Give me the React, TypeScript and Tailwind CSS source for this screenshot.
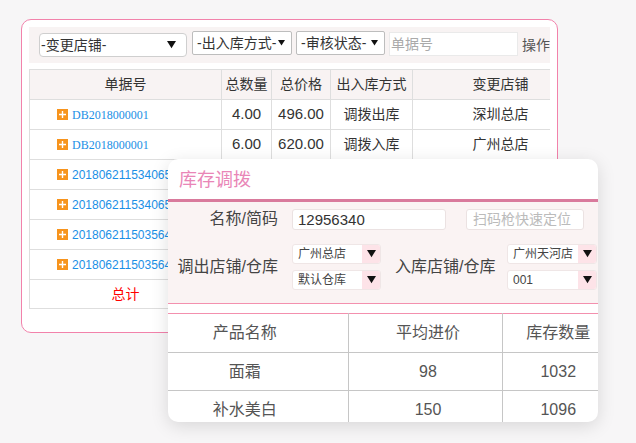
import React from "react";

const FONT = { fontFamily: '"Liberation Sans", "Noto Sans CJK SC", sans-serif' };

function PlusIcon() {
  return (
    <svg width="11" height="11" viewBox="0 0 11 11" className="shrink-0">
      <rect width="11" height="11" fill="#f7941d" />
      <path d="M5.5 2v7M2 5.5h7" stroke="#fff" strokeWidth="1.4" />
    </svg>
  );
}

function Caret({ size = 8 }: { size?: number }) {
  return (
    <svg width={size} height={size * 0.8} viewBox="0 0 10 8">
      <path d="M0 0h10L5 8z" fill="#111" />
    </svg>
  );
}

// rows 3-6 sit under the modal, only their order number shows
const ORDERS = [
  { no: "DB2018000001", serif: true, qty: "4.00", price: "496.00", type: "调拨出库", shop: "深圳总店" },
  { no: "DB2018000001", serif: true, qty: "6.00", price: "620.00", type: "调拨入库", shop: "广州总店" },
  { no: "2018062115340653", serif: false, qty: "", price: "", type: "", shop: "" },
  { no: "2018062115340653", serif: false, qty: "", price: "", type: "", shop: "" },
  { no: "2018062115035645", serif: false, qty: "", price: "", type: "", shop: "" },
  { no: "2018062115035645", serif: false, qty: "", price: "", type: "", shop: "" },
];

const PRODUCTS = [
  { name: "面霜", price: "98", stock: "1032" },
  { name: "补水美白", price: "150", stock: "1096" },
];

function ModalSelect({ label }: { label: string }) {
  return (
    <div className="flex h-[20px] bg-white border border-[#efe6e6] rounded-[3px] overflow-hidden">
      <span className="flex-1 pl-[5px] text-[12px] leading-[18px] text-[#444] whitespace-nowrap">{label}</span>
      <span className="w-[18px] bg-[#fde3e8] flex items-center justify-center">
        <Caret size={9} />
      </span>
    </div>
  );
}

export default function App() {
  return (
    <div className="relative w-[636px] h-[443px] bg-[#f7f6f7] overflow-hidden pt-[19px] pl-[21px]" style={FONT}>
      {/* Back card — order list */}
      <div className="w-[537px] h-[314px] rounded-[10px] border border-[#f282ab] bg-white p-[7px]">
        <div className="h-full overflow-hidden">
          {/* Toolbar */}
          <div className="h-[36px] bg-[#f8f3f3] flex items-start pl-[10px] text-[14px] text-[#333]">
            <div className="mt-[6px] w-[148px] h-[24px] border border-[#cfcfcf] rounded-[4px] bg-white flex items-center justify-between pl-[1px] pr-[10px]">
              <span>-变更店铺-</span>
              <Caret size={9} />
            </div>
            <div className="mt-[4px] ml-[5px] w-[100px] h-[24px] border border-[#bdbdbd] rounded-[2px] bg-white flex items-center justify-between pl-[4px] pr-[6px]">
              <span>-出入库方式-</span>
              <Caret size={7} />
            </div>
            <div className="mt-[4px] ml-[4px] w-[89px] h-[24px] border border-[#bdbdbd] rounded-[2px] bg-white flex items-center justify-between pl-[4px] pr-[6px]">
              <span>-审核状态-</span>
              <Caret size={7} />
            </div>
            <div className="mt-[5px] ml-[4px] w-[129px] h-[24px] border border-[#eaeaea] bg-white flex items-center pl-[1px] text-[#aaa]">
              单据号
            </div>
            <span className="mt-[8px] ml-[4px] text-[#555] whitespace-nowrap">操作</span>
          </div>

          {/* Order table */}
          <table className="mt-[6px] w-[559px] table-fixed border-collapse text-[14px] text-[#333]">
            <colgroup>
              <col className="w-[192px]" />
              <col className="w-[50px]" />
              <col className="w-[59px]" />
              <col className="w-[82px]" />
              <col className="w-[176px]" />
            </colgroup>
            <thead>
              <tr className="h-[30px] bg-[#f8f3f3]">
                {["单据号", "总数量", "总价格", "出入库方式", "变更店铺"].map((h) => (
                  <th key={h} className="border border-[#dedede] font-normal text-center whitespace-nowrap">
                    {h}
                  </th>
                ))}
              </tr>
            </thead>
            <tbody>
              {ORDERS.map((o, i) => (
                <tr key={i} className="h-[30px]">
                  <td className="border border-[#dedede] pl-[27px] overflow-hidden">
                    <div className="flex items-center gap-[4px] whitespace-nowrap">
                      <PlusIcon />
                      <span
                        className="text-[12px] text-[#1a8fe6]"
                        style={o.serif ? { fontFamily: '"Liberation Serif", serif' } : undefined}
                      >
                        {o.no}
                      </span>
                    </div>
                  </td>
                  <td className="border border-[#dedede] text-center text-[15px]">{o.qty}</td>
                  <td className="border border-[#dedede] text-center text-[15px]">{o.price}</td>
                  <td className="border border-[#dedede] text-center">{o.type}</td>
                  <td className="border border-[#dedede] text-center">{o.shop}</td>
                </tr>
              ))}
              <tr className="h-[29px]">
                <td className="border border-[#dedede] text-center text-[14px] text-[#f00]">总计</td>
                <td className="border border-[#dedede]"></td>
                <td className="border border-[#dedede]"></td>
                <td className="border border-[#dedede]"></td>
                <td className="border border-[#dedede]"></td>
              </tr>
            </tbody>
          </table>
        </div>
      </div>

      {/* Front modal — stock transfer */}
      <div className="absolute left-[168px] top-[159px] w-[430px] h-[263px] rounded-[10px] bg-white overflow-hidden shadow-[0_4px_18px_rgba(0,0,0,0.13)]">
        <div className="h-[40px] pl-[11px] pt-[2px] flex items-center text-[18px] text-[#e986b7]">库存调拨</div>
        <div className="h-[3px] bg-[#d97a9c]" />

        {/* Form */}
        <div className="h-[102px] bg-[#faf3f3] border-b border-[#f390ae] pt-[5px]">
          <div className="flex items-center">
            <span className="w-[110px] text-right text-[16px] text-[#444]">名称/简码</span>
            <div className="ml-[14px] w-[154px] h-[21px] bg-white border border-[#ebe2e2] rounded-[3px] pl-[5px] text-[15px] leading-[19px] text-[#333]">
              12956340
            </div>
            <div className="ml-[20px] w-[118px] h-[21px] bg-white border border-[#ebe2e2] rounded-[3px] pl-[6px] text-[14px] leading-[19px] text-[#bbb]">
              扫码枪快速定位
            </div>
          </div>
          <div className="mt-[13px] flex items-center">
            <span className="w-[110px] pl-[8px] text-right text-[16px] text-[#444] whitespace-nowrap">调出店铺/仓库</span>
            <div className="ml-[14px] w-[89px] flex flex-col gap-[6px]">
              <ModalSelect label="广州总店" />
              <ModalSelect label="默认仓库" />
            </div>
            <span className="ml-[14px] w-[102px] text-[16px] text-[#444] whitespace-nowrap">入库店铺/仓库</span>
            <div className="ml-[10px] w-[90px] flex flex-col gap-[6px]">
              <ModalSelect label="广州天河店" />
              <ModalSelect label="001" />
            </div>
          </div>
        </div>

        <div className="h-[9px]" />

        {/* Product table */}
        <table className="w-[430px] table-fixed border-collapse text-[16px] text-[#555]">
          <colgroup>
            <col className="w-[180px]" />
            <col className="w-[154px]" />
            <col className="w-[96px]" />
          </colgroup>
          <thead>
            <tr className="h-[39px] border-t border-[#f390ae]">
              <th className="font-normal text-center pr-[26px] border-r border-b border-[#c6c6c6]">产品名称</th>
              <th className="font-normal text-center pl-[6px] border-r border-b border-[#c6c6c6]">平均进价</th>
              <th className="font-normal text-center pl-[16px] border-b border-[#c6c6c6] whitespace-nowrap">库存数量</th>
            </tr>
          </thead>
          <tbody>
            {PRODUCTS.map((p) => (
              <tr key={p.name} className="h-[38px]">
                <td className="text-center pr-[26px] border-r border-b border-[#c6c6c6]">{p.name}</td>
                <td className="text-center pl-[6px] border-r border-b border-[#c6c6c6]">{p.price}</td>
                <td className="text-center pl-[16px] border-b border-[#c6c6c6]">{p.stock}</td>
              </tr>
            ))}
          </tbody>
        </table>
      </div>
    </div>
  );
}
